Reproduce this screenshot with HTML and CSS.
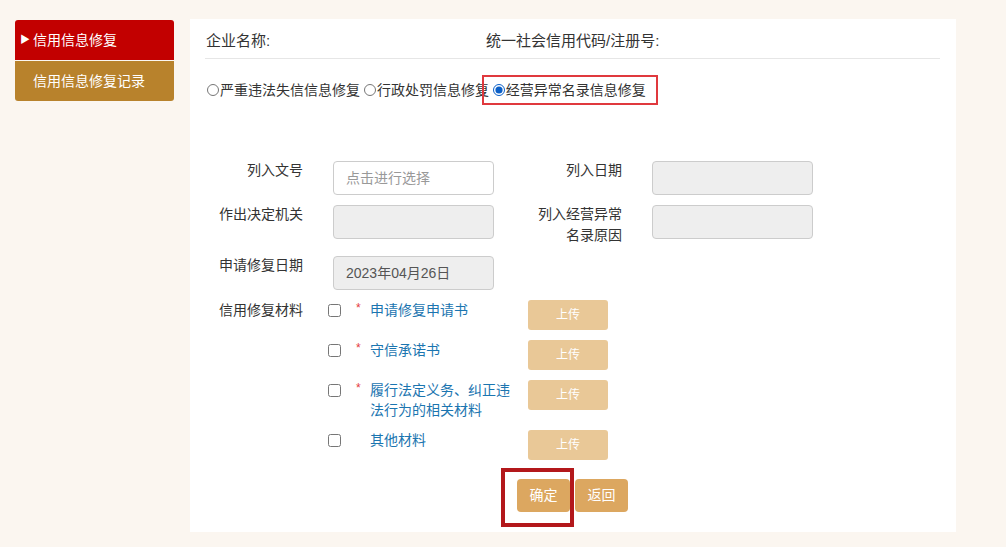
FILE: index.html
```html
<!DOCTYPE html>
<html lang="zh-CN">
<head>
<meta charset="utf-8">
<title>信用信息修复</title>
<link rel="stylesheet" href="styles.css">
</head>
<body>
<div class="page">
  <aside class="sidebar">
    <div class="nav-item active"><span class="tri">&#9654;</span>信用信息修复</div>
    <div class="nav-item record">信用信息修复记录</div>
  </aside>
  <main class="card">
    <div class="head">
      <span class="head-name">企业名称:</span>
      <span class="head-code">统一社会信用代码/注册号:</span>
    </div>
    <div class="types">
      <label class="type"><input type="radio" name="t">严重违法失信信息修复</label>
      <label class="type"><input type="radio" name="t">行政处罚信息修复</label>
      <label class="type marked"><input type="radio" name="t" checked>经营异常名录信息修复</label>
    </div>
    <div class="form">
      <div class="lbl">列入文号</div>
      <div class="field placeholder">点击进行选择</div>
      <div class="lbl">列入日期</div>
      <div class="field ro"></div>

      <div class="lbl">作出决定机关</div>
      <div class="field ro"></div>
      <div class="lbl">列入经营异常名录原因</div>
      <div class="field ro"></div>

      <div class="lbl">申请修复日期</div>
      <div class="field ro">2023年04月26日</div>
      <div></div>
      <div></div>
    </div>
    <div class="materials">
      <div class="lbl mat-lbl">信用修复材料</div>
      <div class="mat-list">
        <div class="mat"><input type="checkbox"><span class="star">*</span><span class="mat-name">申请修复申请书</span><span class="upload">上传</span></div>
        <div class="mat"><input type="checkbox"><span class="star">*</span><span class="mat-name">守信承诺书</span><span class="upload">上传</span></div>
        <div class="mat"><input type="checkbox"><span class="star">*</span><span class="mat-name">履行法定义务、纠正违法行为的相关材料</span><span class="upload">上传</span></div>
        <div class="mat"><input type="checkbox"><span class="star"></span><span class="mat-name">其他材料</span><span class="upload">上传</span></div>
      </div>
    </div>
    <div class="actions">
      <span class="btn confirm">确定</span>
      <span class="btn">返回</span>
    </div>
  </main>
</div>
</body>
</html>
```

FILE: styles.css
```css
* { box-sizing: border-box; }
html, body {
  margin: 0;
  background: #fbf6f0;
  font-family: "Liberation Sans", "Noto Sans CJK SC", sans-serif;
  color: #333;
}
.page {
  display: flex;
  align-items: flex-start;
  padding: 19px 0 0 15px;
  gap: 16px;
}
.sidebar {
  width: 159px;
  margin-top: 1px;
  display: flex;
  flex-direction: column;
  gap: 1px;
  background: #fbf6f0;
}
.nav-item {
  height: 40px;
  line-height: 40px;
  padding-left: 18px;
  color: #fff;
  font-size: 14px;
}
.nav-item.active {
  background: #c20000;
  border-radius: 3px 3px 0 0;
  padding-left: 5px;
}
.tri {
  font-size: 10px;
  margin-right: 3px;
  position: relative;
  top: -2px;
}
.nav-item.record {
  background: #b8822c;
  border-radius: 0 0 3px 3px;
}
.card {
  width: 766px;
  background: #fff;
  padding: 0 16px 20px 15px;
}
.head {
  height: 40px;
  border-bottom: 1px solid #e6e6e6;
  display: flex;
  align-items: center;
  font-size: 15px;
  padding-top: 2px;
}
.head-name { margin-left: 1px; width: 280px; }
.types {
  margin-top: 21px;
  font-size: 14px;
  line-height: 20px;
  height: 22px;
  padding-left: 2px;
  white-space: nowrap;
}
.type input {
  width: 12px;
  height: 12px;
  margin: 0 1px 0 0;
  vertical-align: -1px;
  accent-color: #0b5fc7;
}
.type.marked { position: relative; }
.type.marked::after {
  content: "";
  position: absolute;
  left: -11px;
  right: -12px;
  top: -7px;
  bottom: -7px;
  border: 2px solid #e0393e;
}
.form {
  margin-top: 59px;
  display: grid;
  grid-template-columns: 98px 161px 98px 161px;
  column-gap: 30px;
  row-gap: 10px;
  font-size: 14px;
}
.lbl {
  text-align: right;
  line-height: 21px;
  margin-top: -1px;
  padding-left: 13px;
  font-size: 14px;
}
.field {
  height: 34px;
  border: 1px solid #ccc;
  border-radius: 4px;
  line-height: 32px;
  padding-left: 12px;
  font-size: 14px;
  color: #555;
}
.field.ro { background: #eee; }
.field.placeholder { color: #999; background: #fff; }
.materials {
  margin-top: 10px;
  display: flex;
}
.mat-lbl {
  width: 98px;
  line-height: 20px;
  margin-top: 0;
}
.mat-list {
  margin-left: 25px;
  display: flex;
  flex-direction: column;
  gap: 10px;
}
.mat {
  display: flex;
  align-items: flex-start;
  font-size: 14px;
  line-height: 20px;
}
.mat input {
  width: 13px;
  height: 13px;
  margin: 4px 0 0 0;
}
.star {
  width: 14px;
  margin-left: 15px;
  color: #e4393c;
  font-size: 12px;
  line-height: 16px;
}
.mat-name {
  width: 148px;
  color: #1b75b0;
}
.upload {
  width: 80px;
  height: 30px;
  margin-left: 10px;
  border-radius: 3px;
  background: #e9c897;
  color: #fff;
  font-size: 12px;
  line-height: 30px;
  text-align: center;
}
.actions {
  margin-top: 19px;
  display: flex;
  justify-content: center;
  gap: 5px;
}
.btn {
  width: 53px;
  height: 33px;
  line-height: 33px;
  text-align: center;
  background: #dca760;
  color: #fff;
  font-size: 14px;
  border-radius: 4px;
}
.btn.confirm { position: relative; }
.btn.confirm::after {
  content: "";
  position: absolute;
  left: -16px;
  right: -4px;
  top: -11px;
  bottom: -15px;
  border: 4px solid #b3181b;
}
```
